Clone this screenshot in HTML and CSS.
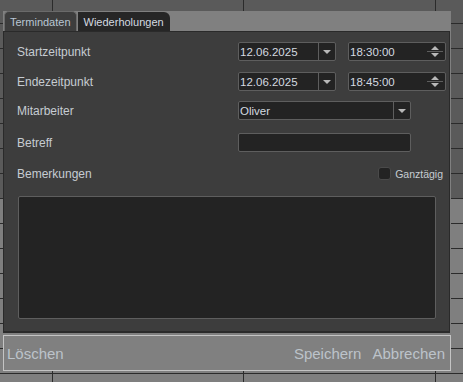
FILE: index.html
```html
<!DOCTYPE html>
<html lang="de">
<head>
    <meta charset="UTF-8">
    <meta name="viewport" content="width=device-width, initial-scale=1.0">
    <title>Termin</title>
    <link rel="stylesheet" href="styles.css">
</head>
<body>
    <div class="dialog">
        <div class="tabs">
            <div class="tab active">Termindaten</div>
            <div class="tab">Wiederholungen</div>
        </div>
        <div class="pane">
            <div class="row">
                <div class="label">Startzeitpunkt</div>
                <div class="combo date">
                    <span class="value">12.06.2025</span>
                    <span class="drop"><i class="tri-down"></i></span>
                </div>
                <div class="combo time">
                    <span class="value">18:30:00</span>
                    <span class="spin"><i class="tri-up"></i><b></b><i class="tri-down"></i></span>
                </div>
            </div>
            <div class="row r2">
                <div class="label">Endezeitpunkt</div>
                <div class="combo date">
                    <span class="value">12.06.2025</span>
                    <span class="drop"><i class="tri-down"></i></span>
                </div>
                <div class="combo time">
                    <span class="value">18:45:00</span>
                    <span class="spin"><i class="tri-up"></i><b></b><i class="tri-down"></i></span>
                </div>
            </div>
            <div class="row r3">
                <div class="label">Mitarbeiter</div>
                <div class="combo wide">
                    <span class="value">Oliver</span>
                    <span class="drop"><i class="tri-down"></i></span>
                </div>
            </div>
            <div class="row r4">
                <div class="label">Betreff</div>
                <div class="combo wide"></div>
            </div>
            <div class="row r5">
                <div class="label">Bemerkungen</div>
                <label class="check"><span class="box"></span>Ganztägig</label>
            </div>
            <div class="notes"></div>
        </div>
        <div class="footer">
            <span class="btn">Löschen</span>
            <span class="spacer"></span>
            <span class="btn">Speichern</span>
            <span class="btn">Abbrechen</span>
        </div>
    </div>
</body>
</html>
```

FILE: styles.css
```css
html, body {
    margin: 0;
    height: 100%;
}
body {
    font-family: "Liberation Sans", Arial, sans-serif;
    font-size: 12px;
    color: #c6ccd2;
    overflow: hidden;
    background-color: #5a5a5a;
    background-image:
        linear-gradient(#2b2b2b, #2b2b2b),
        linear-gradient(#2b2b2b, #2b2b2b),
        linear-gradient(#2b2b2b, #2b2b2b),
        repeating-linear-gradient(to bottom, transparent 0 23px, #2b2b2b 23px 24px, transparent 24px 25px),
        linear-gradient(to bottom, #5a5a5a 0 199px, #7f7f7f 199px);
    background-size: 1px 100%, 1px 100%, 1px 100%, 100% 100%, 100% 100%;
    background-position: 52px 0, 243px 0, 435px 0, 0 0, 0 0;
    background-repeat: no-repeat;
}

/* dialog over the calendar */
.dialog {
    position: absolute;
    left: 3px;
    top: 11px;
    width: 448px;
    background: #808080;
    display: flex;
    flex-direction: column;
}
.tabs {
    display: flex;
    height: 20px;
    padding-left: 1px;
    align-items: flex-end;
}
.tab {
    height: 19px;
    padding: 0 6px;
    font-size: 11px;
    line-height: 20px;
    background: #262626;
    color: #d4dae0;
    border-radius: 0 6px 0 0;
    margin-left: 1px;
}
.tab.active {
    height: 20px;
    margin-left: 0;
    background: #3d3d3d;
    color: #b9c6d3;
    border: 1px solid #6a6a6a;
    border-bottom: 0;
    border-radius: 5px 5px 0 0;
    padding: 0 5px;
    box-sizing: border-box;
    line-height: 20px;
}
.pane {
    height: 302px;
    margin: 0 1px 0 0;
    background: #3d3d3d;
    border: 1px solid #2a2a2a;
    border-bottom-width: 2px;
    box-sizing: border-box;
    padding: 10px 0 0 13px;
}
.row {
    display: flex;
    align-items: center;
    height: 19px;
}
.r2 { margin-top: 11px; }
.r3 { margin-top: 10px; }
.r4 { margin-top: 13px; }
.r5 { margin-top: 12px; }
.label {
    width: 221px;
    flex: none;
}
.combo {
    height: 19px;
    box-sizing: border-box;
    background: #232323;
    border: 1px solid #5e5e5e;
    border-radius: 2px;
    display: flex;
    align-items: center;
    color: #d4dae0;
}
.combo .value {
    flex: 1;
    padding-left: 1px;
    font-size: 11.5px;
}
.date { width: 98px; }
.time { width: 98px; margin-left: 12px; }
.wide { width: 173px; }
.drop {
    width: 16px;
    height: 100%;
    border-left: 1px solid #5e5e5e;
    display: flex;
    align-items: center;
    justify-content: center;
}
.spin {
    width: 16px;
    margin-right: 2px;
    display: flex;
    flex-direction: column;
    align-items: center;
    gap: 1px;
}
.spin b {
    display: block;
    width: 16px;
    height: 1px;
    background: #5e5e5e;
}
.tri-down, .tri-up {
    display: block;
    width: 0;
    height: 0;
    border-left: 4px solid transparent;
    border-right: 4px solid transparent;
}
.tri-down { border-top: 4px solid #b8b8b8; }
.tri-up { border-bottom: 4px solid #b8b8b8; }

.check {
    margin-left: auto;
    margin-right: 6px;
    display: flex;
    align-items: center;
    font-size: 10.5px;
    color: #c6ccd2;
}
.check .box {
    width: 13px;
    height: 13px;
    box-sizing: border-box;
    background: #232323;
    border: 1px solid #4a4a4a;
    border-radius: 3px;
    margin-right: 4px;
}
.notes {
    margin-top: 13px;
    width: 418px;
    height: 123px;
    margin-left: 1px;
    box-sizing: border-box;
    background: #232323;
    border: 1px solid #5e5e5e;
    border-radius: 2px;
}
.footer {
    height: 36px;
    margin-top: 2px;
    box-sizing: border-box;
    border: 1px solid #c4c4c4;
    background: #808080;
    display: flex;
    align-items: center;
    padding: 0 5px 0 3px;
    font-size: 15px;
    color: #bcc3ca;
}
.spacer { flex: 1; }
.btn + .btn { margin-left: 11px; }
```
